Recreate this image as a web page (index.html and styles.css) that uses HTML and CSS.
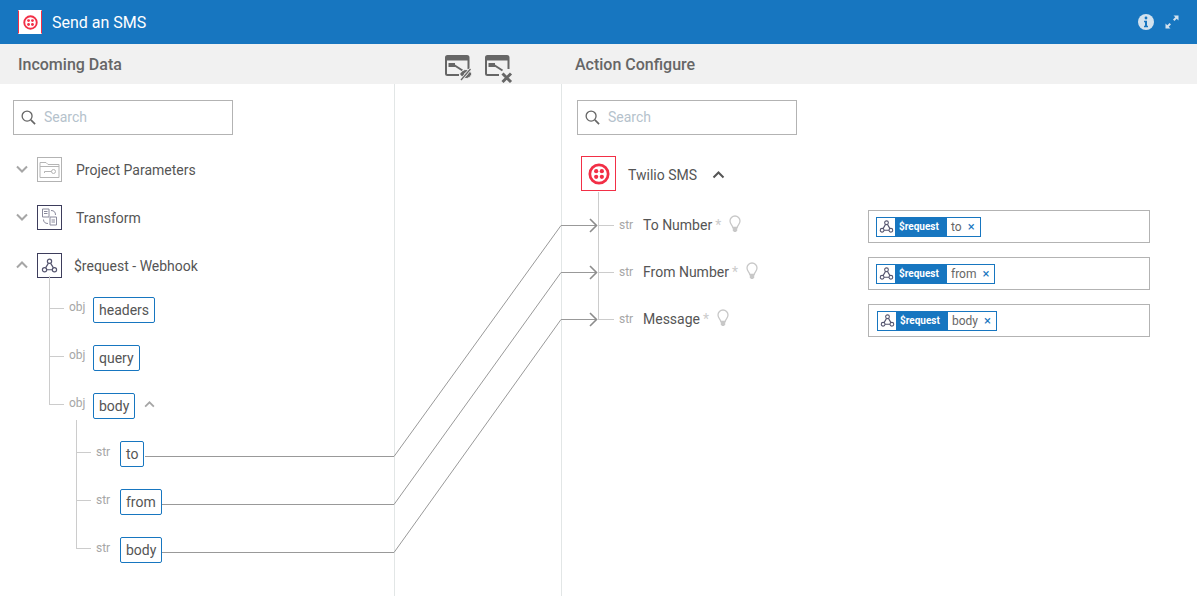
FILE: index.html
```html
<!DOCTYPE html>
<html lang="en">
<head>
    <meta charset="UTF-8">
    <meta name="viewport" content="width=device-width, initial-scale=1.0">
    <title>Send an SMS</title>
    <link rel="stylesheet" href="styles.css">
</head>
<body>
    <svg class="defs" width="0" height="0">
        <symbol id="twilio" viewBox="0 0 24 24">
            <circle cx="12" cy="12" r="10" fill="none" stroke="#f22f46" stroke-width="3"/>
            <circle cx="8.900" cy="8.900" r="2.300" fill="#f22f46"/>
            <circle cx="15.100" cy="8.900" r="2.300" fill="#f22f46"/>
            <circle cx="8.900" cy="15.100" r="2.300" fill="#f22f46"/>
            <circle cx="15.100" cy="15.100" r="2.300" fill="#f22f46"/>
        </symbol>
        <symbol id="webhook" viewBox="0 0 24 24">
            <g fill="none" stroke="#55556f" stroke-width="1.700">
                <circle cx="12" cy="6" r="3"/>
                <circle cx="5" cy="18" r="3"/>
                <circle cx="19" cy="18" r="3"/>
                <path d="M13.500 8.600l4 6.800M8 18h8M10.500 8.600l-4 6.800"/>
            </g>
        </symbol>
        <symbol id="chevron" viewBox="0 0 12 8">
            <path d="M1 1.500l5 5 5-5" fill="none" stroke="currentColor" stroke-width="2"/>
        </symbol>
        <symbol id="search" viewBox="0 0 16 16">
            <circle cx="6.500" cy="6.500" r="5.300" fill="none" stroke="#666" stroke-width="1.400"/>
            <path d="M10.500 10.500l4.500 4.500" stroke="#666" stroke-width="1.800"/>
        </symbol>
        <symbol id="bulb" viewBox="0 0 12 18">
            <path d="M3.800 12.500c0-2-2.800-3.300-2.800-6.500a5 5 0 0 1 10 0c0 3.200-2.800 4.500-2.800 6.500z" fill="none" stroke="#c8c8c8" stroke-width="1.300"/>
            <path d="M3.800 13h4.400v2.500l-1.200 1.500h-2l-1.200-1.500z" fill="#c8c8c8"/>
        </symbol>
        <symbol id="link" viewBox="0 0 28 28">
            <path d="M23.500 14v-11.500a1.500 1.500 0 0 0-1.500-1.500h-19.500a1.500 1.500 0 0 0-1.500 1.500v16a1.500 1.500 0 0 0 1.500 1.500h11.500" fill="none" stroke="#666" stroke-width="2"/>
            <path d="M1 1.500h22.500v4h-22.500z" fill="#666"/>
            <path d="M3.500 8h6.500v4h-6.500z" fill="#666"/>
            <path d="M9 10l8.500 5.500" stroke="#666" stroke-width="2"/>
        </symbol>
    </svg>

    <header class="topbar">
        <span class="topbar-logo"><svg width="15" height="15"><use href="#twilio"/></svg></span>
        <span class="topbar-title">Send an SMS</span>
        <svg class="topbar-info" width="16" height="16" viewBox="0 0 16 16">
            <circle cx="8" cy="8" r="8" fill="#d3e2ee"/>
            <circle cx="8" cy="4" r="1.400" fill="#1776c0"/>
            <path d="M6 6.800h3v5h1v1.400h-4v-1.400h1v-3.600h-1z" fill="#1776c0"/>
        </svg>
        <svg class="topbar-expand" width="14" height="14" viewBox="0 0 14 14">
            <path d="M8.500 0.500h5v5l-1.800-1.800-2.300 2.300-1.400-1.400 2.300-2.300zM5.500 13.500h-5v-5l1.800 1.800 2.300-2.300 1.400 1.400-2.300 2.300z" fill="#d3e2ee"/>
        </svg>
    </header>

    <div class="subbar">
        <h2 class="subbar-title">Incoming Data</h2>
        <div class="subbar-tools">
            <svg width="28" height="28" viewBox="0 0 28 28">
                <use href="#link"/>
                <path d="M14.500 19c2-3 4.200-4.500 6.500-4.500s4.500 1.500 6 4.500c-1.500 3-3.700 4.500-6 4.500s-4.500-1.500-6.500-4.500z" fill="#666" stroke="#f1f1f1" stroke-width="1"/>
                <circle cx="20.800" cy="19" r="1.600" fill="#f1f1f1"/>
                <path d="M16 25l9.500-11" stroke="#f1f1f1" stroke-width="2.800"/>
                <path d="M16 25l9.500-11" stroke="#666" stroke-width="1.300"/>
            </svg>
            <svg width="28" height="28" viewBox="0 0 28 28">
                <use href="#link"/>
                <path d="M17.500 18.500l8.500 8.500M26 18.500l-8.500 8.500" stroke="#666" stroke-width="3"/>
            </svg>
        </div>
        <h2 class="subbar-title subbar-title-right">Action Configure</h2>
    </div>

    <main class="mapper">
        <section class="panel panel-source">
            <label class="search">
                <svg width="15" height="15"><use href="#search"/></svg>
                <input type="text" placeholder="Search">
            </label>

            <div class="root-row">
                <svg class="chevron" width="12" height="8"><use href="#chevron"/></svg>
                <span class="node-icon node-icon-muted">
                    <svg width="21" height="19" viewBox="0 0 21 19" fill="none" stroke="#b5b5b5">
                        <path d="M1 17.500v-15h6l2 2h11v13z"/>
                        <path d="M1 6.500h19"/>
                        <circle cx="14.500" cy="11.500" r="2"/>
                        <path d="M12.500 11.500h-7v1.500"/>
                    </svg>
                </span>
                <span class="root-label">Project Parameters</span>
            </div>
            <div class="root-row">
                <svg class="chevron" width="12" height="8"><use href="#chevron"/></svg>
                <span class="node-icon">
                    <svg width="17" height="18" viewBox="0 0 17 18" fill="none" stroke="#8a8a9c">
                        <path d="M1.500 1h6.500v8h-6.500zM9 9h6.500v8h-6.500z"/>
                        <path d="M3 3.500h3.500M3 5.500h3.500M10.500 12h3.500M10.500 14h3.500"/>
                        <path d="M10 2.500c3 0 4.500 1.500 4.500 4.500M7 15.500c-3 0-4.500-1.500-4.500-4"/>
                    </svg>
                </span>
                <span class="root-label">Transform</span>
            </div>
            <div class="root-row">
                <svg class="chevron chevron-up" width="12" height="8"><use href="#chevron"/></svg>
                <span class="node-icon"><svg width="17" height="17"><use href="#webhook"/></svg></span>
                <span class="root-label root-label-tight">$request - Webhook</span>
            </div>

            <ul class="tree tree-root">
                <li>
                    <div class="tree-row"><span class="type type-obj">obj</span><span class="field">headers</span></div>
                </li>
                <li>
                    <div class="tree-row"><span class="type type-obj">obj</span><span class="field">query</span></div>
                </li>
                <li>
                    <div class="tree-row">
                        <span class="type type-obj">obj</span><span class="field">body</span>
                        <svg class="chevron chevron-up chevron-small" width="11" height="7"><use href="#chevron"/></svg>
                    </div>
                    <ul class="tree tree-nested">
                        <li><div class="tree-row"><span class="type">str</span><span class="field">to</span></div></li>
                        <li><div class="tree-row"><span class="type">str</span><span class="field">from</span></div></li>
                        <li><div class="tree-row"><span class="type">str</span><span class="field">body</span></div></li>
                    </ul>
                </li>
            </ul>
        </section>

        <section class="panel panel-middle"></section>

        <section class="panel-target">
            <label class="search">
                <svg width="15" height="15"><use href="#search"/></svg>
                <input type="text" placeholder="Search">
            </label>

            <div class="action-head">
                <span class="action-logo"><svg width="22" height="22"><use href="#twilio"/></svg></span>
                <span class="action-name">Twilio SMS</span>
                <svg class="chevron chevron-up chevron-dark" width="13" height="8"><use href="#chevron"/></svg>
            </div>

            <ul class="tree tree-action">
                <li>
                    <div class="action-row">
                        <span class="type">str</span>
                        <span class="action-label">To Number</span><span class="required">*</span>
                        <svg class="bulb" width="12" height="18"><use href="#bulb"/></svg>
                        <div class="token-field">
                            <span class="token">
                                <span class="token-icon"><svg width="15" height="15"><use href="#webhook"/></svg></span>
                                <span class="token-source">$request</span>
                                <span class="token-name">to</span>
                                <span class="token-close">×</span>
                            </span>
                        </div>
                    </div>
                </li>
                <li>
                    <div class="action-row">
                        <span class="type">str</span>
                        <span class="action-label">From Number</span><span class="required">*</span>
                        <svg class="bulb" width="12" height="18"><use href="#bulb"/></svg>
                        <div class="token-field">
                            <span class="token">
                                <span class="token-icon"><svg width="15" height="15"><use href="#webhook"/></svg></span>
                                <span class="token-source">$request</span>
                                <span class="token-name">from</span>
                                <span class="token-close">×</span>
                            </span>
                        </div>
                    </div>
                </li>
                <li>
                    <div class="action-row">
                        <span class="type">str</span>
                        <span class="action-label">Message</span><span class="required">*</span>
                        <svg class="bulb" width="12" height="18"><use href="#bulb"/></svg>
                        <div class="token-field token-field-last">
                            <span class="token">
                                <span class="token-icon"><svg width="15" height="15"><use href="#webhook"/></svg></span>
                                <span class="token-source">$request</span>
                                <span class="token-name">body</span>
                                <span class="token-close">×</span>
                            </span>
                        </div>
                    </div>
                </li>
            </ul>
        </section>

        <!-- connections between source fields and action fields -->
        <svg class="links" width="1197" height="512" viewBox="0 84 1197 512" fill="none" stroke="#999">
            <path d="M145 456.500H394L561 225.500H597"/>
            <path d="M162 504.500H394L561 272.500H597"/>
            <path d="M162 552.500H394L561 319.500H597"/>
            <path class="links-arrow" d="M590 219l6.500 6.500-6.500 6.500M590 266l6.500 6.500-6.500 6.500M590 313l6.500 6.500-6.500 6.500"/>
        </svg>
    </main>
</body>
</html>
```
FILE: styles.css
```css
* {
    box-sizing: border-box;
}
body {
    font-family: Roboto, "Liberation Sans", sans-serif;
    background-color: #fff;
    color: #555;
    margin: 0;
    height: 596px;
    overflow: hidden;
}
ul {
    list-style: none;
    margin: 0;
    padding: 0;
}
.defs {
    position: absolute;
}

/* top bar */
.topbar {
    display: flex;
    align-items: center;
    height: 44px;
    padding: 0 18px 0 18px;
    background-color: #1776c0;
    color: #fff;
}
.topbar-logo {
    display: flex;
    align-items: center;
    justify-content: center;
    width: 24px;
    height: 24px;
    background-color: #fff;
    border: 1px solid #f22f46;
    border-top-color: #fff;
    border-bottom-color: #fff;
}
.topbar-title {
    margin-left: 10px;
    font-size: 16px;
}
.topbar-info {
    margin-left: auto;
}
.topbar-expand {
    margin-left: 11px;
}

/* sub header */
.subbar {
    display: grid;
    grid-template-columns: 395px 167px 1fr;
    align-items: center;
    height: 40px;
    background-color: #f1f1f1;
}
.subbar-title {
    margin: 0;
    padding-left: 18px;
    font-size: 16px;
    font-weight: 500;
    color: #666;
}
.subbar-title-right {
    padding-left: 13px;
}
.subbar-tools {
    display: flex;
    align-self: start;
    gap: 12px;
    padding-left: 50px;
    padding-top: 11px;
}

/* main layout */
.mapper {
    position: relative;
    display: grid;
    grid-template-columns: 395px 167px 1fr;
    height: 512px;
}
.panel {
    border-right: 1px solid #e2e6e6;
}
.panel-source {
    padding-top: 16px;
}
.panel-target {
    padding-top: 16px;
    padding-left: 15px;
}
.links {
    position: absolute;
    left: 0;
    top: 0;
    pointer-events: none;
}
.links-arrow {
    stroke: #8c8c8c;
    stroke-width: 1.6;
}

.search {
    display: flex;
    align-items: center;
    gap: 8px;
    width: 220px;
    height: 35px;
    margin-left: 13px;
    padding-left: 7px;
    border: 1px solid #b3b3b3;
}
.panel-target .search {
    margin-left: 0;
}
.search input {
    width: 160px;
    margin-bottom: 2px;
    border: none;
    outline: none;
    padding: 0;
    font-family: inherit;
    font-size: 14px;
    color: #555;
}
.search input::placeholder {
    color: #b5c2cc;
}

/* source tree */
.root-row {
    display: flex;
    align-items: center;
    height: 48px;
    padding-left: 16px;
}
.panel-source .search + .root-row {
    margin-top: 10px;
}
.chevron {
    flex: none;
    color: #a6a6a6;
}
.chevron-up {
    transform: rotate(180deg);
}
.chevron-small {
    margin-left: 9px;
    margin-bottom: 3px;
}
.chevron-dark {
    color: #555;
    margin-left: 15px;
    margin-top: 2px;
}
.node-icon {
    display: flex;
    align-items: center;
    justify-content: center;
    flex: none;
    width: 25px;
    height: 25px;
    margin-left: 9px;
    border: 1px solid #3d3d5c;
}
.node-icon-muted {
    border-color: #b3b3b3;
}
.root-label {
    margin-left: 14px;
    margin-top: 2px;
    font-size: 14px;
}
.root-label-tight {
    margin-left: 12px;
}

.tree-root {
    margin-top: -3px;
    margin-left: 49px;
}
.tree-nested {
    margin-left: 27px;
}
.tree li {
    position: relative;
}
.tree li::before {
    content: "";
    position: absolute;
    left: 0;
    top: 0;
    height: 100%;
    border-left: 1px solid #ccc;
}
.tree li:first-child::before {
    top: -10px;
    height: calc(100% + 10px);
}
.tree li:last-child::before {
    height: 22px;
}
.tree li::after {
    content: "";
    position: absolute;
    left: 0;
    top: 22px;
    width: 15px;
    border-top: 1px solid #ccc;
}
.tree-row {
    display: flex;
    align-items: center;
    height: 48px;
    padding-left: 20px;
}
.type {
    flex: none;
    width: 24px;
    margin-bottom: 5px;
    font-size: 12px;
    color: #a6a6a6;
}
.type-obj {
    margin-bottom: 6px;
}
.field {
    display: block;
    height: 26px;
    padding: 0 5px;
    border: 1px solid #1776c0;
    border-radius: 2px;
    font-size: 14px;
    line-height: 25px;
}

/* target tree */
.action-head {
    display: flex;
    align-items: center;
    margin-top: 21px;
    margin-left: 4px;
}
.action-logo {
    display: flex;
    align-items: center;
    justify-content: center;
    width: 35px;
    height: 35px;
    border: 1px solid #f22f46;
}
.action-name {
    margin-left: 12px;
    margin-top: 3px;
    font-size: 14px;
}
.tree-action {
    margin-top: 11px;
    margin-left: 21px;
}
.tree-action li::after {
    top: 23px;
    width: 16px;
}
.tree-action li:last-child::before {
    height: 23px;
}
.action-row {
    display: flex;
    align-items: center;
    height: 47px;
    padding-left: 21px;
}
.action-row .type {
    margin-bottom: 2px;
}
.action-label {
    margin-bottom: 2px;
    font-size: 14px;
}
.required {
    margin-left: 3px;
    margin-bottom: 2px;
    font-size: 14px;
    color: #ccc;
}
.bulb {
    margin-left: 8px;
    margin-bottom: 3px;
}
.token-field {
    display: flex;
    align-items: center;
    width: 282px;
    height: 33px;
    margin-left: auto;
    margin-right: 47px;
    margin-top: 2px;
    padding-left: 7px;
    border: 1px solid #b3b3b3;
}
.token-field-last {
    padding-left: 8px;
}
.token {
    display: flex;
    align-items: center;
    height: 20px;
    border: 1px solid #1776c0;
    font-size: 12px;
}
.token-icon {
    display: flex;
    align-items: center;
    justify-content: center;
    width: 18px;
    height: 18px;
}
.token-source {
    width: 52px;
    height: 18px;
    padding-left: 4px;
    background-color: #1776c0;
    color: #fff;
    font-size: 10px;
    font-weight: 700;
    line-height: 18px;
}
.token-name {
    margin-left: 4px;
    color: #666;
}
.token-close {
    margin: 0 5px 0 6px;
    color: #1776c0;
    font-size: 13px;
}
```
